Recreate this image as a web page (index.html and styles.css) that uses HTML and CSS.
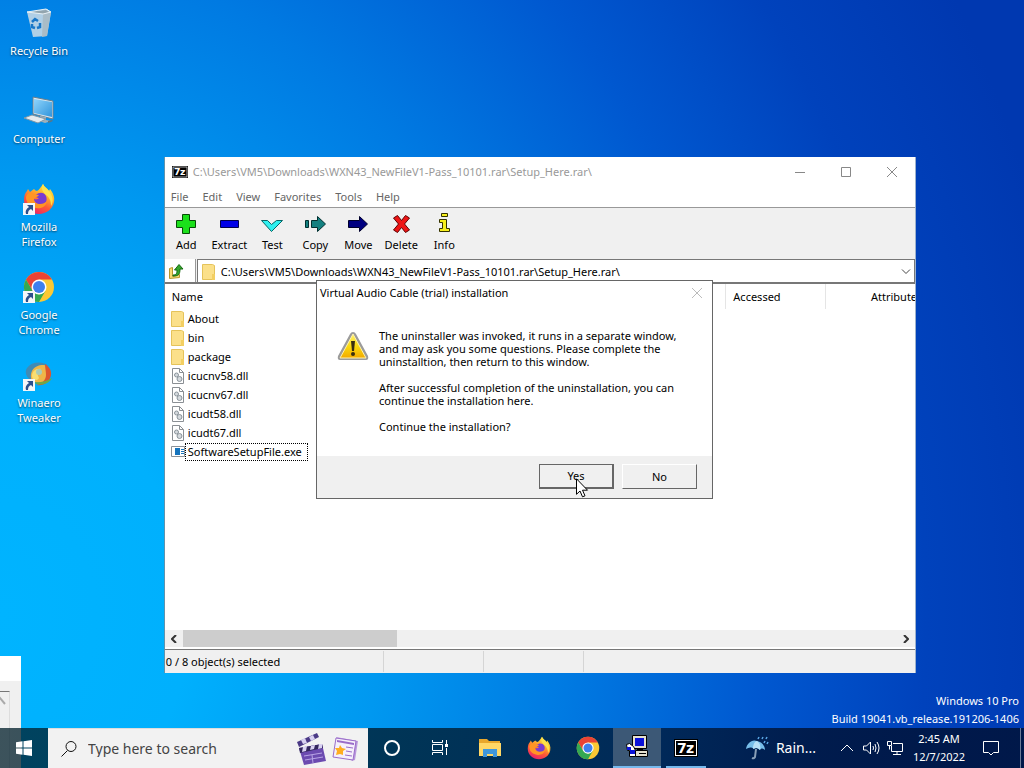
FILE: index.html
```html
<!DOCTYPE html>
<html lang="en">
<head>
  <meta charset="UTF-8">
  <meta name="viewport" content="width=device-width, initial-scale=1.0">
  <title>Desktop</title>
  <link rel="stylesheet" href="styles.css">
</head>
<body>
  <!-- shared icons -->
  <svg class="defs" aria-hidden="true">
    <defs>
      <linearGradient id="fx-body" x1="0.8" y1="0" x2="0.3" y2="1">
        <stop offset="0" stop-color="#fff04a"/>
        <stop offset="0.35" stop-color="#ffb02a"/>
        <stop offset="0.65" stop-color="#ff5a36"/>
        <stop offset="1" stop-color="#e8206c"/>
      </linearGradient>
      <linearGradient id="warn-fill" x1="0" y1="0" x2="0" y2="1">
        <stop offset="0" stop-color="#fff36a"/>
        <stop offset="0.55" stop-color="#fbd80c"/>
        <stop offset="1" stop-color="#f2a900"/>
      </linearGradient>
      <linearGradient id="screen-fill" x1="0" y1="0" x2="1" y2="1">
        <stop offset="0" stop-color="#8fd4fb"/>
        <stop offset="1" stop-color="#2f94dc"/>
      </linearGradient>
      <symbol id="i-firefox" viewBox="0 0 32 32">
        <path fill="url(#fx-body)" d="M20 1c1 3 4 4 6 7l1-2c3 4 5 8 4 13-1 7-8 12-15 12C8 31 1 25 1 17c0-4 1-7 3-9l1-2 2 3 4-3c1 1 2 2 3 2 2-1 4-4 6-7z"/>
        <path fill="#7a3bd0" d="M13 12c3-3 8-3 10 1 2 5-1 9-6 9-4 0-7-3-6-6 2 1 4 0 5-1-2 0-4-1-3-3z"/>
        <path fill="#ff9524" d="M3 14c1-3 3-5 6-4 2 1 4 2 7 2-1 2-4 2-5 4 0 3 3 5 6 5 3 0 5-1 7-3-1 6-6 8-11 7C7 24 3 20 3 14z"/>
        <path fill="#ffe14a" d="M20 1c1 3 4 4 6 7 4 5 5 10 2 15 0-6-2-9-6-12-3-3-4-6-2-10z"/>
      </symbol>
      <symbol id="i-chrome" viewBox="0 0 32 32">
        <circle cx="16" cy="16" r="15" fill="#fcc934"/>
        <path fill="#ea4335" d="M3 8.500A15 15 0 0 1 29 8.500H16L9.500 19.750z"/>
        <path fill="#34a853" d="M3 8.500A15 15 0 0 0 16 31L22.500 19.750 16 23.500 9.500 19.750z"/>
        <circle cx="16" cy="16" r="7.500" fill="#fff"/>
        <circle cx="16" cy="16" r="6" fill="#3f7fee"/>
      </symbol>
      <symbol id="i-shortcut" viewBox="0 0 12 12">
        <rect width="12" height="12" fill="#f4f6f8"/>
        <path fill="#2c4f8c" d="M4 2h6v6L8 6C6 7 5 8 5 11H3C2 8 3 6 6 4z"/>
      </symbol>
      <symbol id="i-folder" viewBox="0 0 14 16">
        <path fill="#fbe08a" stroke="#e5c35a" d="M.5.5h10l2 1v14H.500z"/>
        <path fill="#f3cf62" d="M10 10h3v6h-3z"/>
      </symbol>
      <symbol id="i-dll" viewBox="0 0 14 16">
        <path fill="#fff" stroke="#8a8f94" d="M1.500.5h7l4 4v11h-11z"/>
        <path fill="none" stroke="#8a8f94" d="M8.500.5v4h4"/>
        <circle cx="5.500" cy="7" r="2" fill="#d5dade" stroke="#8b949b"/>
        <circle cx="8.500" cy="11" r="2.500" fill="#d5dade" stroke="#8b949b"/>
      </symbol>
      <symbol id="i-7z" viewBox="0 0 24 18">
        <rect width="24" height="18" fill="#000"/>
        <rect x="1" y="1" width="22" height="16" fill="#fff"/>
        <rect x="2" y="2" width="20" height="14" fill="#000"/>
        <text x="3" y="14" class="seven">7</text>
        <text x="12" y="14" class="seven">z</text>
      </symbol>
    </defs>
  </svg>

  <div class="screen">
    <main class="desktop">
      <nav class="shortcuts">
        <a class="shortcut" href="#">
          <svg width="32" height="32" viewBox="0 0 32 32">
            <path fill="#cfdde5" d="M4 5l20-3 4 3-4 24-14 1z" opacity=".85"/>
            <path fill="#a9bcc7" d="M20 7l8-2-4 24-5 1z"/>
            <path fill="#93a5ae" d="M6 5l17-2 3 2-6 2z"/>
            <path fill="none" stroke="#e8f0f4" d="M4 5l16 2 8-2-5-3z"/>
            <path fill="none" stroke="#1877c8" stroke-width="2.500" d="M9 15l3-3 3 2M17 16l0 4-3 1M12 21l-3-1 0-3"/>
          </svg>
          <span>Recycle Bin</span>
        </a>
        <a class="shortcut" href="#">
          <svg width="32" height="32" viewBox="0 0 32 32">
            <path fill="#dce6ec" stroke="#667f90" d="M10 2l20 4v18l-20-5z"/>
            <path fill="url(#screen-fill)" d="M11 4l18 3v15l-18-4z"/>
            <path fill="#9fb0ba" d="M17 21l6 1v3l5 1-6 2-9-3 4-1z"/>
            <path fill="#e4eaee" stroke="#8197a5" d="M1 23l8-3 14 4-8 4z"/>
            <path fill="#5f7480" d="M25 26l4-1 1 1-5 2z"/>
          </svg>
          <span>Computer</span>
        </a>
        <a class="shortcut" href="#">
          <svg width="32" height="32" viewBox="0 0 32 32">
            <use href="#i-firefox" width="32" height="32"/>
            <use href="#i-shortcut" y="20" width="12" height="12"/>
          </svg>
          <span>Mozilla Firefox</span>
        </a>
        <a class="shortcut" href="#">
          <svg width="32" height="32" viewBox="0 0 32 32">
            <use href="#i-chrome" width="32" height="32"/>
            <use href="#i-shortcut" y="20" width="12" height="12"/>
          </svg>
          <span>Google<br>Chrome</span>
        </a>
        <a class="shortcut" href="#">
          <svg width="32" height="32" viewBox="0 0 32 32">
            <circle cx="16" cy="14" r="10" fill="#efb648"/>
            <path fill="#418bb4" d="M4 9c5-7 16-7 22-2-6-2-14-1-17 5-2 4-1 8 0 10-5-3-8-8-5-13z"/>
            <path fill="#dc552f" d="M22 5c7 4 8 12 3 17-3 4-8 5-12 4 6-1 10-5 10-10 0-4-1-7-1-11z"/>
            <path fill="#71a646" d="M29 19c-3 6-12 9-19 4 6 1 12 0 19-4z"/>
            <path fill="#f8de72" d="M9 17c0-5 4-8 9-7-4 2-4 5-2 9-1 3-7 3-7-2z"/>
            <circle cx="16" cy="13" r="3" fill="#a9cbb8"/>
            <use href="#i-shortcut" y="20" width="12" height="12"/>
          </svg>
          <span>Winaero Tweaker</span>
        </a>
      </nav>

      <!-- window mostly off screen -->
      <div class="stray">
        <div class="stray-title"></div>
        <div class="stray-panel">
          <svg width="9" height="14" viewBox="0 0 9 14"><path fill="none" stroke="#aaa" stroke-width="2" d="M-2 9L0 6l5 6"/></svg>
        </div>
      </div>

      <section class="window">
        <header class="titlebar">
          <svg width="16" height="12" viewBox="0 0 24 18" preserveAspectRatio="none"><use href="#i-7z" width="24" height="18"/></svg>
          <h1>C:\Users\VM5\Downloads\WXN43_NewFileV1-Pass_10101.rar\Setup_Here.rar\</h1>
          <div class="win-buttons">
            <button type="button" aria-label="Minimize"><svg width="10" height="10" viewBox="0 0 10 10"><path d="M0 5.500h10"/></svg></button>
            <button type="button" aria-label="Maximize"><svg width="10" height="10" viewBox="0 0 10 10"><path d="M.5.5h9v9h-9z"/></svg></button>
            <button type="button" aria-label="Close"><svg width="10" height="10" viewBox="0 0 10 10"><path d="M0 0l10 10M10 0L0 10"/></svg></button>
          </div>
        </header>

        <nav class="menubar">
          <button type="button">File</button>
          <button type="button">Edit</button>
          <button type="button">View</button>
          <button type="button">Favorites</button>
          <button type="button">Tools</button>
          <button type="button">Help</button>
        </nav>

        <div class="toolbar">
          <button type="button">
            <svg width="24" height="24" viewBox="0 0 24 24"><path fill="#1be01b" stroke="#064b06" d="M8.500 2.500h7v6h6v7h-6v6h-7v-6h-6v-7h6z"/></svg>
            Add
          </button>
          <button type="button">
            <svg width="24" height="24" viewBox="0 0 24 24"><path fill="#0000e8" stroke="#00004c" d="M3.500 8.500h18v7h-18z"/></svg>
            Extract
          </button>
          <button type="button">
            <svg width="24" height="24" viewBox="0 0 24 24"><path fill="#2ff0f0" stroke="#056565" d="M1.500 8.500h6l4 4 5-4h6l-11 11z"/></svg>
            Test
          </button>
          <button type="button">
            <svg width="24" height="24" viewBox="0 0 24 24"><path fill="#138080" stroke="#002f2f" d="M2.500 8.500h3v7h-3zM8.500 8.500h6v-4l8 7.500-8 7.500v-4h-6z"/></svg>
            Copy
          </button>
          <button type="button">
            <svg width="24" height="24" viewBox="0 0 24 24"><path fill="#000080" stroke="#00002b" d="M2.500 8.500h11v-4l8 7.500-8 7.500v-4h-11z"/></svg>
            Move
          </button>
          <button type="button">
            <svg width="24" height="24" viewBox="0 0 24 24"><path fill="#ee1414" stroke="#5d0000" d="M4.500 6l4-2.500 4 5 4-5 4 2.500-5 6 5 6-4 2.500-4-5-4 5-4-2.500 5-6z"/></svg>
            Delete
          </button>
          <button type="button">
            <svg width="24" height="24" viewBox="0 0 24 24"><path fill="#f7ef1d" stroke="#333100" d="M9.500 1.500h6v3h-6zM7.500 7.500h7v9h3v3h-10v-3h3v-6h-3z"/></svg>
            Info
          </button>
        </div>

        <div class="address">
          <button type="button" class="up" aria-label="Up one level">
            <svg width="16" height="16" viewBox="0 0 16 16">
              <path fill="#f7dc72" stroke="#b8972b" d="M1.500 5.500l3-1v9l7-2v3l-10 1z"/>
              <path fill="#35a52b" stroke="#176b12" d="M5 12c3 0 4-1 4-5H6.500L11 1.500l4 4.500h-3c0 6-2 7-7 7z"/>
            </svg>
          </button>
          <label class="path">
            <svg width="14" height="16"><use href="#i-folder" width="14" height="16"/></svg>
            <select aria-label="Current folder">
              <option>C:\Users\VM5\Downloads\WXN43_NewFileV1-Pass_10101.rar\Setup_Here.rar\</option>
            </select>
            <svg class="caret" width="10" height="6" viewBox="0 0 10 6"><path d="M1 .5l4 4 4-4"/></svg>
          </label>
        </div>

        <div class="list">
          <table class="files">
            <colgroup>
              <col class="c-name"><col><col><col><col><col><col>
            </colgroup>
            <thead>
              <tr><th>Name</th><th></th><th></th><th></th><th></th><th>Accessed</th><th class="attr">Attributes</th></tr>
            </thead>
            <tbody>
              <tr><td><span class="file"><svg width="14" height="16"><use href="#i-folder" width="14" height="16"/></svg><b>About</b></span></td><td></td><td></td><td></td><td></td><td></td><td class="attr">D</td></tr>
              <tr><td><span class="file"><svg width="14" height="16"><use href="#i-folder" width="14" height="16"/></svg><b>bin</b></span></td><td></td><td></td><td></td><td></td><td></td><td class="attr">D</td></tr>
              <tr><td><span class="file"><svg width="14" height="16"><use href="#i-folder" width="14" height="16"/></svg><b>package</b></span></td><td></td><td></td><td></td><td></td><td></td><td class="attr">D</td></tr>
              <tr><td><span class="file"><svg width="14" height="16"><use href="#i-dll" width="14" height="16"/></svg><b>icucnv58.dll</b></span></td><td></td><td></td><td></td><td></td><td></td><td class="attr">A</td></tr>
              <tr><td><span class="file"><svg width="14" height="16"><use href="#i-dll" width="14" height="16"/></svg><b>icucnv67.dll</b></span></td><td></td><td></td><td></td><td></td><td></td><td class="attr">A</td></tr>
              <tr><td><span class="file"><svg width="14" height="16"><use href="#i-dll" width="14" height="16"/></svg><b>icudt58.dll</b></span></td><td></td><td></td><td></td><td></td><td></td><td class="attr">A</td></tr>
              <tr><td><span class="file"><svg width="14" height="16"><use href="#i-dll" width="14" height="16"/></svg><b>icudt67.dll</b></span></td><td></td><td></td><td></td><td></td><td></td><td class="attr">A</td></tr>
              <tr><td><span class="file focused"><svg width="14" height="16" viewBox="0 0 14 16"><path fill="#fff" stroke="#8b9197" d="M.5 2.500h13v10H.500z"/><path fill="#1674bd" d="M4 4h5v7H4z"/><path stroke="#1674bd" d="M10 5.500h3M10 7.500h3M10 9.500h3"/></svg><b>SoftwareSetupFile.exe</b></span></td><td></td><td></td><td></td><td></td><td></td><td class="attr">A</td></tr>
            </tbody>
          </table>
          <div class="hscroll">
            <button type="button" aria-label="Scroll left"><svg width="6" height="8" viewBox="0 0 6 8"><path d="M5 0L1 4l4 4"/></svg></button>
            <div class="track"><div class="thumb"></div></div>
            <button type="button" aria-label="Scroll right"><svg width="6" height="8" viewBox="0 0 6 8"><path d="M1 0l4 4-4 4"/></svg></button>
          </div>
        </div>

        <footer class="status">
          <span>0 / 8 object(s) selected</span><span></span><span></span><span></span>
        </footer>
      </section>

      <section class="dialog" role="dialog" aria-labelledby="dlg-title">
        <header class="dialog-title">
          <h2 id="dlg-title">Virtual Audio Cable (trial) installation</h2>
          <button type="button" aria-label="Close"><svg width="10" height="10" viewBox="0 0 10 10"><path d="M0 0l10 10M10 0L0 10"/></svg></button>
        </header>
        <div class="dialog-body">
          <svg width="32" height="32" viewBox="0 0 32 32">
            <path fill="#9b9b9b" d="M16 2q2 0 3 2l12 22q1 4-2 4H3q-3 0-2-4L13 4q1-2 3-2z"/>
            <path fill="url(#warn-fill)" stroke="#fff3b0" d="M16 4l13 24H3z"/>
            <path fill="#3a2f10" d="M14 11h4l-1 10h-2z"/>
            <circle cx="16" cy="24" r="2" fill="#3a2f10"/>
          </svg>
          <div class="message">
            <p>The uninstaller was invoked, it runs in a separate window,<br>and may ask you some questions. Please complete the<br>uninstalltion, then return to this window.</p>
            <p>After successful completion of the uninstallation, you can<br>continue the installation here.</p>
            <p>Continue the installation?</p>
          </div>
        </div>
        <footer class="dialog-actions">
          <button type="button" class="default">Yes</button>
          <button type="button">No</button>
        </footer>
      </section>

      <div class="watermark">
        <p>Windows 10 Pro</p>
        <p>Build 19041.vb_release.191206-1406</p>
      </div>
    </main>

    <footer class="taskbar">
      <button type="button" class="start" aria-label="Start">
        <svg width="16" height="16" viewBox="0 0 16 16"><path fill="#fff" d="M0 2.200L6.500 1.300V7.500H0zM7.500 1.200L16 0v7.500H7.500zM0 8.500h6.500v6.200L0 13.800zM7.500 8.500H16V16l-8.500-1.200z"/></svg>
      </button>
      <label class="search">
        <svg width="18" height="18" viewBox="0 0 18 18"><circle cx="11" cy="6.500" r="5"/><path d="M7.500 10.500L1.500 16.500"/></svg>
        <input type="text" placeholder="Type here to search">
        <svg class="pic" width="32" height="34" viewBox="0 0 32 34">
          <path fill="#4b3a86" d="M2 10l20-9 2 4L4 15z"/>
          <path fill="#d9d2f2" d="M6 8l4-2 2 5-4 1zM14 5l4-2 2 4-4 2z"/>
          <path fill="#6c4bb0" d="M4 16l23-4 4 17-22 4z"/>
          <path fill="#33275e" d="M4 16l23-4 1 4-23 5z"/>
          <path fill="#d9d2f2" d="M8 15l4-1-1 5-4 1zM16 14l4-1-1 4-4 1zM24 12l3 0 0 4-4 1z"/>
          <path stroke="#b9a5e6" fill="none" d="M9 24l18-3M10 28l18-3M17 23l1 8"/>
        </svg>
        <svg class="pic" width="26" height="26" viewBox="0 0 26 26">
          <path fill="#b998dc" d="M4 1l22 4-3 19-3 1z"/>
          <path fill="#f5effb" stroke="#9a6cc9" d="M4 2l20 3-3 19-20-3z"/>
          <path fill="#9a6cc9" d="M5 4l17 3 0 2-17-3z"/>
          <path stroke="#9a6cc9" fill="none" d="M14 11l7 1M14 15l6 1M13 19l7 1"/>
          <path fill="#ffad1f" d="M8 9l2 3 4 1-3 2 0 4-3-1-4 1 1-4-2-3 4 0z"/>
        </svg>
      </label>
      <nav class="apps">
        <button type="button" aria-label="Cortana"><svg width="24" height="24" viewBox="0 0 24 24"><circle cx="12" cy="12" r="7" fill="none" stroke="#fff" stroke-width="2"/></svg></button>
        <button type="button" aria-label="Task View"><svg width="24" height="24" viewBox="0 0 24 24"><path fill="none" stroke="#fff" d="M3.500 4v2.500h10V4M3.500 19v-2.500h10V19M3.500 8.500h10v6h-10zM17.500 4v4M17.500 12v7"/><path fill="#fff" d="M16 8h3v3h-3z"/></svg></button>
        <button type="button" aria-label="File Explorer"><svg width="24" height="24" viewBox="0 0 24 24"><path fill="#e8a72c" d="M1 3h8l2 2h11v5H1z"/><path fill="#ffd766" d="M1 7h22v13H1z"/><path fill="#3f97dc" d="M5 13h14v8h-4v-3H9v3H5z"/></svg></button>
        <button type="button" aria-label="Firefox"><svg width="24" height="24"><use href="#i-firefox" width="24" height="24"/></svg></button>
        <button type="button" aria-label="Chrome"><svg width="24" height="24"><use href="#i-chrome" width="24" height="24"/></svg></button>
        <button type="button" class="active" aria-label="Setup"><svg width="24" height="24" viewBox="0 0 24 24">
          <path fill="#e4e0cf" stroke="#000" d="M7.500.5h14v13h-14zM10.500 15.500h12v6h-12z"/>
          <path fill="#0a12d8" d="M10 3h9v8h-9z"/>
          <path fill="#000" d="M12 14h6v2h-6zM14 18h7v1h-7z"/>
          <path fill="#fff" stroke="#000" d="M1.500 9.500l3-1 4 3 2 4v6h-6v-6h-2z"/>
          <path fill="#0a12d8" d="M2 12h4v3H2zM5 15h5v4H5z"/>
        </svg></button>
        <button type="button" class="running" aria-label="7-Zip"><svg width="24" height="18"><use href="#i-7z" width="24" height="18"/></svg></button>
      </nav>
      <div class="tray">
        <button type="button" class="weather">
          <svg width="24" height="24" viewBox="0 0 24 24">
            <path fill="#76bde9" d="M1 13C2 7 7 3 12 5c5 1 8 5 8 9-2-2-4-2-5 0-2-2-4-3-6-1-2-2-5-2-8 0z"/>
            <path fill="#b7e0f7" d="M8 13c0-4 1-7 4-8 3 2 4 5 3 9-2-2-4-3-7-1z"/>
            <path fill="none" stroke="#8aa0b8" stroke-width="2" d="M11 13l-1 8q-1 2-3 1"/>
            <path stroke="#5aa7e6" stroke-width="1.500" d="M14 1l-1 2M18 1l-1 2M22 1l-1 2M20 5l-1 2M23 6l-1 2"/>
          </svg>
          Rain...
        </button>
        <button type="button" aria-label="Hidden icons"><svg width="14" height="16" viewBox="0 0 14 16"><path d="M1 11l6-6 6 6"/></svg></button>
        <button type="button" aria-label="Volume"><svg width="18" height="16" viewBox="0 0 18 16"><path d="M1.500 6h3l4-4v12l-4-4h-3zM11 6q1 2 0 4M13 4q2 4 0 8M15 2q4 6 0 12"/></svg></button>
        <button type="button" aria-label="Network"><svg width="16" height="16" viewBox="0 0 16 16"><path d="M6 3.500h9.500v8H4.500V6M10 11.500v3M6 14.500h8M.5 1.500h4v4h-4zM2.500 5.500v4"/></svg></button>
        <time class="clock" datetime="2022-12-07T02:45">2:45 AM<br>12/7/2022</time>
        <button type="button" class="notes" aria-label="Notifications"><svg width="18" height="18" viewBox="0 0 18 18"><path d="M1.500 2.500h15v11h-5L9 16l-2.500-2.500h-5z"/></svg></button>
        <button type="button" class="peek" aria-label="Show desktop"></button>
      </div>
    </footer>

    <svg class="cursor" width="13" height="20" viewBox="0 0 13 20"><path fill="#fff" stroke="#000" d="M.5.8v15.500l3.500-3.300 2.500 5.800 2.500-1-2.500-5.600h5z"/></svg>
  </div>
</body>
</html>
```

FILE: styles.css
```css
* {
  box-sizing: border-box;
}

body {
  margin: 0;
  font-family: "Noto Sans", "Open Sans", sans-serif;
  font-size: 11px;
  line-height: 16px;
  color: #000;
}

h1, h2, p {
  margin: 0;
  font-size: inherit;
  font-weight: normal;
}

button {
  display: flex;
  align-items: center;
  justify-content: center;
  padding: 0;
  border: none;
  background: none;
  color: inherit;
  font: inherit;
}

svg {
  display: block;
  flex: none;
}

.defs {
  position: absolute;
  width: 0;
  height: 0;
}

.seven {
  fill: #fff;
  font: bold 14px "DejaVu Sans", sans-serif;
}

.screen {
  position: relative;
  display: flex;
  flex-direction: column;
  height: 100vh;
  overflow: hidden;
  background: radial-gradient(ellipse 116% 180% at 0 80%, #00b4ff 0, #00b0fd 16%, #0098f0 32%, #007ae2 48%, #0058d0 64%, #0042bc 78%, #0038b0 92%);
}

.desktop {
  flex: 1;
  position: relative;
}

/* desktop icons */
.shortcuts {
  display: flex;
  flex-direction: column;
  width: 78px;
}

.shortcut {
  display: flex;
  flex-direction: column;
  align-items: center;
  gap: 4px;
  height: 88px;
  padding: 7px 12px 0;
  color: #fff;
  line-height: 15px;
  text-align: center;
  text-decoration: none;
  text-shadow: 0 1px 2px rgba(0, 0, 0, 0.6);
}

.shortcut:first-child {
  padding-left: 0;
  padding-right: 0;
}

.stray {
  position: absolute;
  left: 0;
  bottom: -40px;
  width: 21px;
  height: 112px;
  background: #f0f0f0;
}

.stray-title {
  height: 25px;
  background: #fff;
}

.stray-panel {
  width: 10px;
  height: 80px;
  margin-top: 10px;
  border-top: 1px solid #777;
  border-right: 1px solid #ddd;
}

/* file manager */
.window {
  position: absolute;
  left: 16%;
  top: 157px;
  width: 752px;
  display: flex;
  flex-direction: column;
  height: 516px;
  background: #fff;
  border-left: 1px solid #5f93ad;
  border-right: 1px solid #9db2cc;
}

.titlebar {
  display: flex;
  align-items: center;
  gap: 5px;
  height: 30px;
  padding-left: 7px;
  color: #999;
}

.titlebar h1 {
  flex: 1;
}

.win-buttons {
  display: flex;
}

.win-buttons button {
  width: 46px;
  height: 28px;
}

.win-buttons svg, .dialog-title svg {
  fill: none;
  stroke: #888;
}

.menubar {
  display: flex;
  gap: 14px;
  height: 20px;
  padding-left: 6px;
  color: #666;
}

.toolbar {
  display: flex;
  height: 52px;
  border-top: 1px solid #999;
  background: #f0f0f0;
}

.toolbar button {
  flex-direction: column;
  width: 43px;
  gap: 1px;
  padding-top: 4px;
  justify-content: flex-start;
}

.address {
  display: flex;
  height: 25px;
  background: #f0f0f0;
  border-bottom: 2px solid #777;
}

.up {
  width: 31px;
  padding-right: 7px;
  background: #fff;
  border-right: 1px solid #999;
}

.path {
  flex: 1;
  display: flex;
  align-items: center;
  margin-left: 1px;
  padding: 1px 3px 0 4px;
  background: #fff;
  border: 1px solid #777;
  border-bottom: none;
}

.path select {
  flex: 1;
  min-width: 0;
  appearance: none;
  padding: 0 5px;
  border: none;
  background: none;
  color: #000;
  font: inherit;
}

.caret {
  fill: none;
  stroke: #444;
}

.list {
  flex: 1;
  display: flex;
  flex-direction: column;
  justify-content: space-between;
  overflow: hidden;
  padding-bottom: 2px;
}

.files {
  width: 761px;
  table-layout: fixed;
  border-collapse: collapse;
}

.files col {
  width: 100px;
}

.files .c-name {
  width: 161px;
}

.files th {
  height: 25px;
  padding: 0 7px;
  border-right: 1px solid #e5e5e5;
  font-weight: normal;
  text-align: left;
}

.files td {
  height: 19px;
  padding: 0 4px;
}

.files .attr {
  text-align: right;
  padding-right: 3px;
}

.file {
  display: flex;
  align-items: center;
  padding-left: 2px;
  white-space: nowrap;
}

.file b {
  font-weight: normal;
  padding: 0 5px 0 2px;
  border: 1px solid transparent;
}

.focused b {
  border: 1px dotted #000;
}

.hscroll {
  display: flex;
  height: 17px;
  background: #f0f0f0;
}

.hscroll button {
  width: 18px;
}

.hscroll svg {
  fill: none;
  stroke: #333;
  stroke-width: 2;
}

.track {
  flex: 1;
  display: flex;
}

.thumb {
  width: 30%;
  background: #cdcdcd;
}

.status {
  display: flex;
  align-items: center;
  height: 24px;
  border-top: 1px solid #777;
  background: #f0f0f0;
}

.status span {
  width: 100px;
  height: 21px;
  padding: 3px 1px;
  border-right: 1px solid #d5d5d5;
}

.status span:first-child {
  width: 219px;
}

.status span:last-child {
  border: none;
}

/* message box */
.dialog {
  position: absolute;
  left: 316px;
  top: 280px;
  width: 397px;
  border: 1px solid #666;
  background: #fff;
}

.dialog-title {
  display: flex;
  align-items: center;
  justify-content: space-between;
  height: 24px;
  padding: 0 10px 0 3px;
}

.dialog-title svg {
  stroke: #bbb;
}

.dialog-body {
  display: flex;
  gap: 10px;
  height: 151px;
  padding: 24px 20px;
}

.dialog-body svg {
  margin-top: 1px;
}

.message {
  line-height: 13px;
  white-space: nowrap;
}

.message p {
  margin-bottom: 13px;
}

.dialog-actions {
  display: flex;
  justify-content: flex-end;
  gap: 8px;
  padding: 8px 15px 9px;
  background: #f0f0f0;
}

.dialog-actions button {
  width: 75px;
  height: 25px;
  border: 1px solid;
  border-color: #fff #666 #666 #fff;
  background: #f0f0f0;
}

.dialog-actions .default {
  border: 1px solid #666;
  border-right-width: 2px;
  border-bottom-width: 2px;
}

.watermark {
  position: absolute;
  right: 5px;
  bottom: 0;
  color: #fff;
  line-height: 18px;
  text-align: right;
}

/* taskbar */
.taskbar {
  position: relative;
  display: flex;
  height: 40px;
  background: linear-gradient(90deg, rgba(0, 30, 42, 0.75), rgba(0, 36, 60, 0.85) 40%, rgba(0, 26, 60, 0.82) 65%, rgba(0, 16, 50, 0.82) 80%);
  color: #fff;
}

.start {
  width: 48px;
}

.search {
  display: flex;
  align-items: center;
  width: 320px;
  padding: 0 10px 0 12px;
  background: #f2f2f2;
  border-top: 1px solid #ddd;
}

.search svg:first-child {
  fill: none;
  stroke: #111;
}

.search input {
  flex: 1;
  min-width: 0;
  padding: 0 10px;
  border: none;
  background: none;
  font: inherit;
  font-size: 14px;
}

.search input::placeholder {
  color: #444;
}

.pic + .pic {
  margin-left: 5px;
}

.apps {
  display: flex;
  gap: 1px;
}

.apps button {
  width: 48px;
}

.apps .active {
  background: #3c5876;
  border-bottom: 2px solid #76b9ed;
}

.apps .running {
  position: relative;
}

.apps .running::after {
  content: "";
  position: absolute;
  left: 4px;
  right: 4px;
  bottom: 0;
  height: 2px;
  background: #76b9ed;
}

.tray {
  display: flex;
  align-items: stretch;
  margin-left: auto;
}

.tray svg {
  fill: none;
  stroke: #fff;
}

.tray .weather svg {
  stroke: none;
}

.tray button {
  width: 24px;
}

.tray .weather {
  width: auto;
  gap: 7px;
  margin-right: 19px;
  font-size: 14px;
}

.clock {
  align-self: center;
  width: 64px;
  line-height: 18px;
  text-align: center;
}

.tray .notes {
  width: 40px;
}

.tray .peek {
  width: 4px;
  margin-left: 9px;
  border-left: 1px solid #6c7b98;
}

.cursor {
  position: absolute;
  left: 576px;
  top: 478px;
}
```
